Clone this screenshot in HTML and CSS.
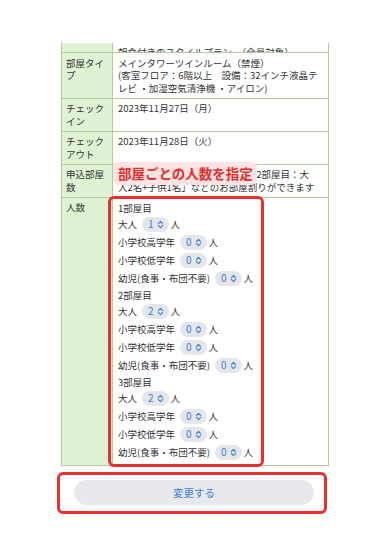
FILE: index.html
```html
<!DOCTYPE html>
<html lang="ja">
<head>
<meta charset="utf-8">
<link rel="stylesheet" href="styles.css">
</head>
<body>
<div class="page">
  <div class="info">
    <div class="row cut">
      <div class="th"></div>
      <div class="td"><span>朝食付きのスタイルプラン　（全員対象）</span></div>
    </div>
    <div class="row">
      <div class="th">部屋タイ<br>プ</div>
      <div class="td">メインタワーツインルーム（禁煙）<br>(客室フロア：6階以上　設備：32インチ液晶テ<br>レビ ・加湿空気清浄機 ・アイロン)</div>
    </div>
    <div class="row">
      <div class="th">チェック<br>イン</div>
      <div class="td">2023年11月27日（月）</div>
    </div>
    <div class="row">
      <div class="th">チェック<br>アウト</div>
      <div class="td">2023年11月28日（火）</div>
    </div>
    <div class="row">
      <div class="th">申込部屋<br>数</div>
      <div class="td">※例えば「１部屋目：大人1名、2部屋目：大<br>人2名+子供1名」などのお部屋割りができます
        <div class="callout">部屋ごとの人数を指定</div>
      </div>
    </div>
    <div class="row">
      <div class="th">人数</div>
      <div class="td people">
        <div class="room">1部屋目</div>
        <div class="pr">大人<span class="sel">1<svg viewBox="0 0 8 10"><path d="M1.5 4 L4 1.5 L6.5 4 M1.5 6 L4 8.5 L6.5 6"/></svg></span>人</div>
        <div class="pr">小学校高学年<span class="sel">0<svg viewBox="0 0 8 10"><path d="M1.5 4 L4 1.5 L6.5 4 M1.5 6 L4 8.5 L6.5 6"/></svg></span>人</div>
        <div class="pr">小学校低学年<span class="sel">0<svg viewBox="0 0 8 10"><path d="M1.5 4 L4 1.5 L6.5 4 M1.5 6 L4 8.5 L6.5 6"/></svg></span>人</div>
        <div class="pr">幼児(食事・布団不要)<span class="sel">0<svg viewBox="0 0 8 10"><path d="M1.5 4 L4 1.5 L6.5 4 M1.5 6 L4 8.5 L6.5 6"/></svg></span>人</div>
        <div class="room">2部屋目</div>
        <div class="pr">大人<span class="sel">2<svg viewBox="0 0 8 10"><path d="M1.5 4 L4 1.5 L6.5 4 M1.5 6 L4 8.5 L6.5 6"/></svg></span>人</div>
        <div class="pr">小学校高学年<span class="sel">0<svg viewBox="0 0 8 10"><path d="M1.5 4 L4 1.5 L6.5 4 M1.5 6 L4 8.5 L6.5 6"/></svg></span>人</div>
        <div class="pr">小学校低学年<span class="sel">0<svg viewBox="0 0 8 10"><path d="M1.5 4 L4 1.5 L6.5 4 M1.5 6 L4 8.5 L6.5 6"/></svg></span>人</div>
        <div class="pr">幼児(食事・布団不要)<span class="sel">0<svg viewBox="0 0 8 10"><path d="M1.5 4 L4 1.5 L6.5 4 M1.5 6 L4 8.5 L6.5 6"/></svg></span>人</div>
        <div class="room">3部屋目</div>
        <div class="pr">大人<span class="sel">2<svg viewBox="0 0 8 10"><path d="M1.5 4 L4 1.5 L6.5 4 M1.5 6 L4 8.5 L6.5 6"/></svg></span>人</div>
        <div class="pr">小学校高学年<span class="sel">0<svg viewBox="0 0 8 10"><path d="M1.5 4 L4 1.5 L6.5 4 M1.5 6 L4 8.5 L6.5 6"/></svg></span>人</div>
        <div class="pr">小学校低学年<span class="sel">0<svg viewBox="0 0 8 10"><path d="M1.5 4 L4 1.5 L6.5 4 M1.5 6 L4 8.5 L6.5 6"/></svg></span>人</div>
        <div class="pr">幼児(食事・布団不要)<span class="sel">0<svg viewBox="0 0 8 10"><path d="M1.5 4 L4 1.5 L6.5 4 M1.5 6 L4 8.5 L6.5 6"/></svg></span>人</div>
        <div class="frame"></div>
      </div>
    </div>
  </div>
  <div class="submit-wrap">
    <button class="submit" type="button">変更する</button>
  </div>
</div>
</body>
</html>
```
FILE: styles.css
```css
* { box-sizing: border-box; }
html, body { margin: 0; padding: 0; background: #fff; }
body {
  font-family: "Noto Sans CJK JP", "Noto Sans", sans-serif;
  font-size: 9.5px;
  line-height: 12.5px;
  color: #333;
}
.page { padding-top: 43px; }
.info {
  margin-left: 61px;
  width: 268px;
  border-left: 1px solid #b4cb9c;
  border-right: 1px solid #b4cb9c;
}
.row {
  display: grid;
  grid-template-columns: 51px 1fr;
  border-bottom: 1px solid #b4cb9c;
}
.th {
  background: #dff2d4;
  border-right: 1px solid #b4cb9c;
  padding: 3.5px 4px;
}
.td {
  padding: 3.5px 5px;
  position: relative;
  white-space: nowrap;
}
.row.cut .th, .row.cut .td { height: 9px; padding: 0 5px; overflow: hidden; }
.row.cut .td { display: flex; align-items: flex-end; }
.row.cut .td span { display: block; margin-bottom: -6px; }
.callout {
  position: absolute;
  left: 0;
  top: -3px;
  width: 144px;
  height: 23px;
  padding: 0 5px;
  border-radius: 6px;
  background: #fde3e3;
  color: #e3302e;
  font-weight: 700;
  font-size: 13.5px;
  line-height: 23px;
}
.people { padding: 3px 5px; }
.room { height: 15px; line-height: 15px; }
.pr {
  display: flex;
  align-items: center;
  height: 18px;
}
.sel {
  display: inline-flex;
  align-items: center;
  justify-content: center;
  gap: 3px;
  height: 15px;
  margin: 0 2px 0 5px;
  padding: 0 5px 0 6px;
  border-radius: 8px;
  background: #e4e6ea;
  color: #3a7fdc;
  font-size: 10px;
}
.sel svg {
  width: 7px;
  height: 9px;
  fill: none;
  stroke: #3a7fdc;
  stroke-width: 1.3;
  stroke-linecap: round;
  stroke-linejoin: round;
}
.frame {
  position: absolute;
  left: -5px;
  top: -2px;
  width: 156px;
  bottom: -2px;
  border: 3px solid #e8312f;
  border-radius: 6px;
  pointer-events: none;
}
.submit-wrap {
  margin: 6px 0 0 57px;
  width: 270px;
  height: 42px;
  border: 3px solid #e8312f;
  border-radius: 6px;
  padding: 5px 10px 0 14px;
}
.submit {
  display: block;
  width: 100%;
  height: 25px;
  border: none;
  border-radius: 13px;
  background: #e8e9ec;
  color: #3f82d8;
  font-family: "Noto Sans CJK JP", sans-serif;
  font-size: 10.5px;
  padding: 0;
}
```
